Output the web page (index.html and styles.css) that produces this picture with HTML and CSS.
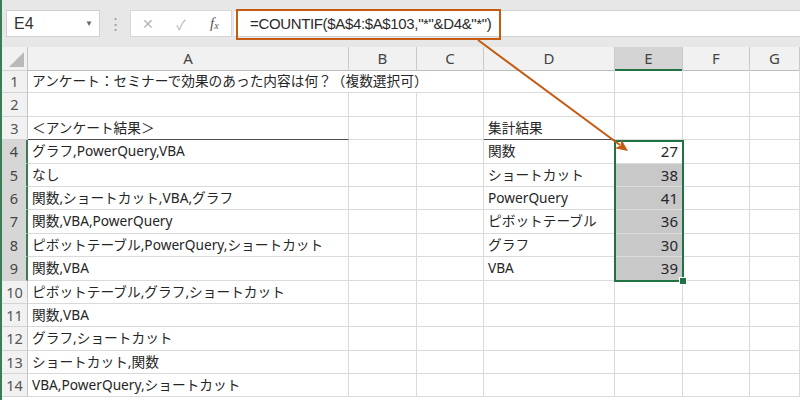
FILE: index.html
```html
<!DOCTYPE html>
<html lang="ja">
<head>
<meta charset="utf-8">
<link rel="stylesheet" href="styles.css">
</head>
<body>
<div class="app">
  <div class="toolbar">
    <div class="namebox"><span>E4</span><span class="dd">▼</span></div>
    <div class="dots">⋮</div>
    <div class="btns"><span class="b x">✕</span><span class="b ok">✓</span><span class="b fx"><i>f</i><sub>x</sub></span></div>
    <div class="fbar">=COUNTIF($A$4:$A$103,"*"&amp;D4&amp;"*")</div>
  </div>
  <div class="sheet">
    <div class="row head"><div class="h corner"><span class="tri"></span></div><div class="c">A</div><div class="c">B</div><div class="c">C</div><div class="c">D</div><div class="c selh">E</div><div class="c">F</div><div class="c">G</div></div>
    <div class="row"><div class="h">1</div><div class="c span3">アンケート：セミナーで効果のあった内容は何？（複数選択可）</div><div class="c"></div><div class="c"></div><div class="c"></div><div class="c"></div></div>
    <div class="row"><div class="h">2</div><div class="c"></div><div class="c"></div><div class="c"></div><div class="c"></div><div class="c"></div><div class="c"></div><div class="c"></div></div>
    <div class="row"><div class="h">3</div><div class="c bb">＜アンケート結果＞</div><div class="c"></div><div class="c"></div><div class="c bb">集計結果</div><div class="c"></div><div class="c"></div><div class="c"></div></div>
    <div class="row"><div class="h sel">4</div><div class="c">グラフ,PowerQuery,VBA</div><div class="c"></div><div class="c"></div><div class="c">関数</div><div class="c n">27</div><div class="c"></div><div class="c"></div></div>
    <div class="row"><div class="h sel">5</div><div class="c">なし</div><div class="c"></div><div class="c"></div><div class="c">ショートカット</div><div class="c n g">38</div><div class="c"></div><div class="c"></div></div>
    <div class="row"><div class="h sel">6</div><div class="c">関数,ショートカット,VBA,グラフ</div><div class="c"></div><div class="c"></div><div class="c">PowerQuery</div><div class="c n g">41</div><div class="c"></div><div class="c"></div></div>
    <div class="row"><div class="h sel">7</div><div class="c">関数,VBA,PowerQuery</div><div class="c"></div><div class="c"></div><div class="c">ピボットテーブル</div><div class="c n g">36</div><div class="c"></div><div class="c"></div></div>
    <div class="row"><div class="h sel">8</div><div class="c">ピボットテーブル,PowerQuery,ショートカット</div><div class="c"></div><div class="c"></div><div class="c">グラフ</div><div class="c n g">30</div><div class="c"></div><div class="c"></div></div>
    <div class="row"><div class="h sel">9</div><div class="c">関数,VBA</div><div class="c"></div><div class="c"></div><div class="c">VBA</div><div class="c n g">39</div><div class="c"></div><div class="c"></div></div>
    <div class="row"><div class="h">10</div><div class="c">ピボットテーブル,グラフ,ショートカット</div><div class="c"></div><div class="c"></div><div class="c"></div><div class="c"></div><div class="c"></div><div class="c"></div></div>
    <div class="row"><div class="h">11</div><div class="c">関数,VBA</div><div class="c"></div><div class="c"></div><div class="c"></div><div class="c"></div><div class="c"></div><div class="c"></div></div>
    <div class="row"><div class="h">12</div><div class="c">グラフ,ショートカット</div><div class="c"></div><div class="c"></div><div class="c"></div><div class="c"></div><div class="c"></div><div class="c"></div></div>
    <div class="row"><div class="h">13</div><div class="c">ショートカット,関数</div><div class="c"></div><div class="c"></div><div class="c"></div><div class="c"></div><div class="c"></div><div class="c"></div></div>
    <div class="row"><div class="h">14</div><div class="c">VBA,PowerQuery,ショートカット</div><div class="c"></div><div class="c"></div><div class="c"></div><div class="c"></div><div class="c"></div><div class="c"></div></div>
  </div>
</div>
<div class="callout"></div>
<div class="selbox"><span class="handle"></span></div>
<svg class="arrow" width="800" height="400" viewBox="0 0 800 400">
  <line x1="478" y1="40" x2="620" y2="145" stroke="#c55a11" stroke-width="2"/>
  <polygon points="628,151 621.4,139.4 620.6,145.6 614.8,148.2" fill="#c55a11"/>
</svg>
</body>
</html>
```

FILE: styles.css
```css
html, body {
  margin: 0;
  padding: 0;
}
body {
  width: 800px;
  height: 400px;
  overflow: hidden;
  position: relative;
  background: #ffffff;
  font-family: "Noto Sans", "Noto Sans CJK JP", sans-serif;
  color: #262626;
}
.app {
  border-left: 2px solid #3a7d55;
  height: 400px;
  box-sizing: border-box;
}
.toolbar {
  height: 47px;
  background: #e7e7e7;
  display: flex;
  align-items: flex-start;
  padding-top: 10px;
  box-sizing: border-box;
}
.namebox {
  margin-left: 4px;
  width: 94px;
  height: 27px;
  background: #fff;
  border: 1px solid #cfcfcf;
  box-sizing: border-box;
  display: flex;
  align-items: center;
  justify-content: space-between;
  padding: 0 6px 0 7px;
  font-family: "Liberation Sans", sans-serif;
  font-size: 16px;
  color: #333;
}
.namebox .dd {
  font-size: 8px;
  color: #666;
}
.dots {
  width: 30px;
  height: 27px;
  line-height: 27px;
  text-align: center;
  color: #9a9a9a;
  font-size: 15px;
}
.btns {
  width: 102px;
  height: 27px;
  background: #fff;
  border: 1px solid #d6d6d6;
  box-sizing: border-box;
  display: flex;
  align-items: center;
}
.btns .b {
  flex: 1;
  text-align: center;
  color: #b5b5b5;
  font-size: 14px;
}
.btns .fx {
  color: #555;
  font-family: "Liberation Serif", serif;
  font-size: 15px;
}
.btns .fx sub {
  font-size: 10px;
  font-style: italic;
  vertical-align: -1px;
}
.fbar {
  flex: 1;
  margin-left: 2px;
  height: 27px;
  background: #fff;
  border-top: 1px solid #d0d0d0;
  border-bottom: 1px solid #d0d0d0;
  box-sizing: border-box;
  padding-left: 16px;
  line-height: 25px;
  font-family: "Liberation Sans", sans-serif;
  font-size: 15px;
  letter-spacing: -0.35px;
  color: #2a2a2a;
  white-space: nowrap;
}
.row {
  display: grid;
  grid-template-columns: 26px 321px 68px 67px 131px 68px 67px 1fr;
  height: 23.4px;
}
.row.head {
  height: 23px;
  background: #f1f1f1;
}
.c, .h {
  box-sizing: border-box;
  border-right: 1px solid #dadada;
  border-bottom: 1px solid #dadada;
  font-size: 13.7px;
  line-height: 22px;
  padding-left: 4px;
  white-space: nowrap;
  overflow: visible;
}
.h {
  background: #f1f1f1;
  border-right: 1px solid #c4c4c4;
  border-bottom: 1px solid #d4d4d4;
  padding: 0;
  text-align: center;
  color: #555;
  font-size: 14.5px;
}
.h.sel {
  background: #d6d6d6;
  border-right: 2px solid #3a7d55;
  color: #444;
}
.head .c {
  padding: 0;
  text-align: center;
  border-right: 1px solid #c9c9c9;
  border-bottom: 1px solid #bdbdbd;
  font-size: 15px;
  color: #444;
  line-height: 22px;
}
.head .c.selh {
  background: #d4d4d4;
  border-bottom: 2px solid #217346;
}
.corner {
  position: relative;
}
.corner .tri {
  position: absolute;
  right: 3px;
  bottom: 3px;
  width: 0;
  height: 0;
  border-left: 15px solid transparent;
  border-bottom: 15px solid #b9b9b9;
}
.span3 {
  grid-column: span 3;
}
.bb {
  border-bottom: 1px solid #4f4f4f;
}
.n {
  text-align: right;
  padding-right: 4px;
  font-size: 15px;
}
.g {
  background: #c8c8c8;
  border-bottom-color: #dcdcdc;
}
.callout {
  position: absolute;
  left: 236px;
  top: 9px;
  width: 265px;
  height: 31px;
  border: 2.5px solid #c55a11;
  box-sizing: border-box;
}
.selbox {
  position: absolute;
  left: 614px;
  top: 140px;
  width: 70px;
  height: 142px;
  border: 2px solid #217346;
  box-sizing: border-box;
}
.handle {
  position: absolute;
  right: -5px;
  bottom: -5px;
  width: 6px;
  height: 6px;
  background: #217346;
  border: 1px solid #fff;
}
.arrow {
  position: absolute;
  left: 0;
  top: 0;
}
```
